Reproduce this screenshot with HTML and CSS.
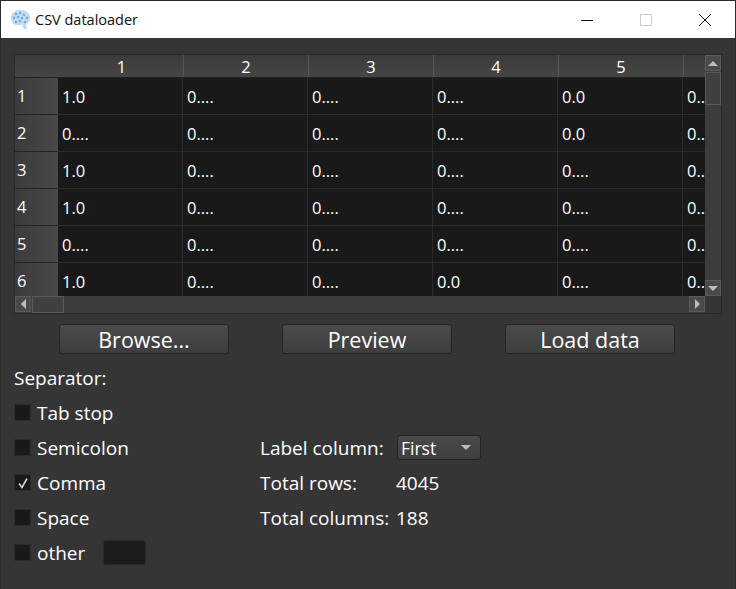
FILE: index.html
```html
<!DOCTYPE html>
<html lang="en">
<head>
    <meta charset="UTF-8">
    <title>CSV dataloader</title>
    <link rel="stylesheet" href="styles.css">
</head>
<body>
    <div class="window">
        <div class="titlebar">
            <svg class="app-icon" width="22" height="22" viewBox="0 0 22 22">
                <path d="M9 1 C4 1 1 4 1 9 C1 13 3 15 6 16 L12 16 L14 20 L17 20 L16 15 C19 14 21 11 20 8 C20 4 14 0 9 1 Z" fill="#c3dcf3"/>
                <g fill="#6ea8e2">
                    <circle cx="6" cy="5" r="1.2"/><circle cx="10" cy="4" r="1.2"/><circle cx="14" cy="6" r="1.2"/>
                    <circle cx="4" cy="9" r="1.2"/><circle cx="8" cy="8" r="1.2"/><circle cx="12" cy="9" r="1.2"/>
                    <circle cx="17" cy="9" r="1.2"/><circle cx="6" cy="13" r="1.2"/><circle cx="10" cy="12" r="1.2"/>
                    <circle cx="15" cy="13" r="1.2"/>
                </g>
            </svg>
            <span class="title">CSV dataloader</span>
            <div class="winbtns">
                <div class="winbtn"><svg width="12" height="12"><path d="M0 6.5H12" stroke="#111"/></svg></div>
                <div class="winbtn"><svg width="12" height="12"><path d="M.5.5H11.5V11.5H.5Z" fill="none" stroke="#ccc"/></svg></div>
                <div class="winbtn"><svg width="12" height="12"><path d="M0 0L12 12M12 0L0 12" stroke="#111"/></svg></div>
            </div>
        </div>

        <div class="content">
            <div class="table-frame">
                <div class="table-view">
                    <div class="header-row">
                        <div class="corner"></div>
                        <div class="col-head">1</div>
                        <div class="col-head">2</div>
                        <div class="col-head">3</div>
                        <div class="col-head">4</div>
                        <div class="col-head">5</div>
                        <div class="col-head"></div>
                    </div>
                    <div class="row">
                        <div class="row-head">1</div>
                        <div class="cell">1.0</div><div class="cell">0....</div><div class="cell">0....</div><div class="cell">0....</div><div class="cell">0.0</div><div class="cell">0...</div>
                    </div>
                    <div class="row">
                        <div class="row-head">2</div>
                        <div class="cell">0....</div><div class="cell">0....</div><div class="cell">0....</div><div class="cell">0....</div><div class="cell">0.0</div><div class="cell">0...</div>
                    </div>
                    <div class="row">
                        <div class="row-head">3</div>
                        <div class="cell">1.0</div><div class="cell">0....</div><div class="cell">0....</div><div class="cell">0....</div><div class="cell">0....</div><div class="cell">0...</div>
                    </div>
                    <div class="row">
                        <div class="row-head">4</div>
                        <div class="cell">1.0</div><div class="cell">0....</div><div class="cell">0....</div><div class="cell">0....</div><div class="cell">0....</div><div class="cell">0...</div>
                    </div>
                    <div class="row">
                        <div class="row-head">5</div>
                        <div class="cell">0....</div><div class="cell">0....</div><div class="cell">0....</div><div class="cell">0....</div><div class="cell">0....</div><div class="cell">0...</div>
                    </div>
                    <div class="row">
                        <div class="row-head">6</div>
                        <div class="cell">1.0</div><div class="cell">0....</div><div class="cell">0....</div><div class="cell">0.0</div><div class="cell">0....</div><div class="cell">0...</div>
                    </div>
                </div>
                <div class="vscroll">
                    <div class="sb-btn"><span class="arrow-up"></span></div>
                    <div class="sb-thumb-v"></div>
                    <div class="sb-btn sb-end"><span class="arrow-down"></span></div>
                </div>
                <div class="hscroll">
                    <div class="sb-btn"><span class="arrow-left"></span></div>
                    <div class="sb-thumb-h"></div>
                    <div class="sb-btn sb-end-h"><span class="arrow-right"></span></div>
                </div>
                <div class="sb-corner"></div>
            </div>

            <div class="buttons">
                <button type="button">Browse...</button>
                <button type="button">Preview</button>
                <button type="button">Load data</button>
            </div>

            <div class="sep-label">Separator:</div>

            <div class="options">
                <div class="separators">
                    <label class="check"><span class="box"></span>Tab stop</label>
                    <label class="check"><span class="box"></span>Semicolon</label>
                    <label class="check"><span class="box"><svg width="14" height="14" viewBox="0 0 14 14"><path d="M3 7.5L6 11.5L11 2.5" fill="none" stroke="#cfcfcf" stroke-width="1.6"/></svg></span>Comma</label>
                    <label class="check"><span class="box"></span>Space</label>
                    <label class="check"><span class="box"></span>other<span class="other-input"></span></label>
                </div>
                <div class="info">
                    <div class="info-row">
                        <span class="info-label">Label column:</span>
                        <div class="combo">First<span class="arrow-down combo-arrow"></span></div>
                    </div>
                    <div class="info-row">
                        <span class="info-label">Total rows:</span>
                        <span>4045</span>
                    </div>
                    <div class="info-row">
                        <span class="info-label">Total columns:</span>
                        <span>188</span>
                    </div>
                </div>
            </div>
        </div>
    </div>
</body>
</html>
```

FILE: styles.css
```css
* {
    box-sizing: border-box;
}
html, body {
    margin: 0;
    height: 100%;
}
body {
    font-family: "Open Sans", "Noto Sans", sans-serif;
    color: #fff;
    background-color: #353535;
    overflow: hidden;
}
.window {
    height: 589px;
    border: 1px solid #2b2b2b;
    border-bottom: none;
    background-color: #353535;
}
.titlebar {
    display: flex;
    align-items: center;
    height: 37px;
    padding-left: 9px;
    background-color: #fff;
    color: #111;
    font-size: 14.5px;
}
.app-icon {
    margin-right: 3px;
}
.winbtns {
    display: flex;
    margin-left: auto;
    margin-right: 1px;
}
.winbtn {
    display: flex;
    align-items: center;
    justify-content: center;
    width: 59px;
    height: 37px;
}
.content {
    padding: 16px 13px 0;
}

/* table */
.table-frame {
    display: grid;
    grid-template-columns: 690px 16px;
    grid-template-rows: 241px 17px;
    width: 708px;
    height: 260px;
    border: 1px solid #2a2a2a;
    background-color: #3a3a3a;
}
.table-view {
    overflow: hidden;
    background-color: #191919;
    font-size: 16.5px;
}
.header-row, .row {
    display: flex;
}
.header-row {
    height: 23px;
    border-bottom: 1px solid #232323;
    background: linear-gradient(#3b3b3b, #454545);
}
.corner {
    flex: 0 0 43px;
}
.col-head {
    flex: 0 0 125px;
    line-height: 23px;
    text-align: center;
    border-left: 1px solid #555;
}
.col-head:nth-child(2) {
    padding-left: 2px;
    border-left: none;
}
.row {
    height: 37px;
    border-bottom: 1px solid #2c2c2c;
}
.row-head {
    flex: 0 0 43px;
    height: 37px;
    padding-left: 2px;
    line-height: 36px;
    background: linear-gradient(90deg, #3b3b3b, #484848);
    border-bottom: 1px solid #232323;
}
.cell {
    flex: 0 0 125px;
    padding-left: 4px;
    line-height: 38px;
    border-right: 1px solid #2c2c2c;
    white-space: nowrap;
    overflow: hidden;
}

/* scrollbars */
.vscroll, .hscroll {
    display: flex;
    background-color: #3c3c3c;
}
.vscroll {
    flex-direction: column;
}
.sb-btn {
    display: flex;
    align-items: center;
    justify-content: center;
    flex: 0 0 16px;
    height: 16px;
    background-color: #4a4a4a;
    box-shadow: inset 0 0 0 1px #5a5a5a;
}
.sb-end {
    margin-top: auto;
}
.sb-end-h {
    margin-left: auto;
}
.sb-thumb-v {
    height: 33px;
    margin-top: 1px;
    background-color: #404040;
    box-shadow: inset 0 0 0 1px #5a5a5a;
}
.sb-thumb-h {
    width: 32px;
    margin-left: 1px;
    background-color: #404040;
    box-shadow: inset 0 0 0 1px #5a5a5a;
}
.sb-corner {
    background-color: #353535;
}
.arrow-up, .arrow-down, .arrow-left, .arrow-right {
    display: block;
    width: 0;
    height: 0;
    border-style: solid;
    border-color: transparent;
}
.arrow-up {
    border-width: 0 5px 5px;
    border-bottom-color: #bdbdbd;
}
.arrow-down {
    border-width: 5px 5px 0;
    border-top-color: #bdbdbd;
}
.arrow-left {
    border-width: 5px 5px 5px 0;
    border-right-color: #bdbdbd;
}
.arrow-right {
    border-width: 5px 0 5px 5px;
    border-left-color: #bdbdbd;
}

/* buttons */
.buttons {
    display: flex;
    gap: 53px;
    margin-top: 10px;
    padding-left: 45px;
}
button {
    width: 170px;
    height: 30px;
    padding: 1px 0 0;
    font-family: "Open Sans", sans-serif;
    font-size: 21.5px;
    line-height: 28px;
    color: #fff;
    background: linear-gradient(#4a4a4a, #3e3e3e);
    border: 1px solid #232323;
    border-radius: 3px;
}

/* bottom part */
.sep-label {
    margin-top: 11px;
    font-size: 19px;
    line-height: 26px;
}
.options {
    display: flex;
    margin-top: 4px;
    font-size: 19px;
}
.separators {
    width: 246px;
}
.check {
    display: flex;
    align-items: center;
    height: 35px;
}
.box {
    display: flex;
    align-items: center;
    justify-content: center;
    flex: 0 0 17px;
    height: 17px;
    margin-right: 6px;
    background-color: #191919;
    border: 1px solid #2c2c2c;
}
.other-input {
    width: 43px;
    height: 25px;
    margin-left: 18px;
    background-color: #1b1b1b;
    border: 1px solid #2a2a2a;
    border-radius: 3px;
}
.info {
    padding-top: 35px;
}
.info-row {
    display: flex;
    align-items: center;
    height: 35px;
}
.info-label {
    width: 136px;
    white-space: nowrap;
}
.combo {
    display: flex;
    align-items: center;
    justify-content: space-between;
    width: 84px;
    height: 25px;
    margin-left: 1px;
    padding: 0 9px 0 3px;
    font-size: 17.5px;
    background: linear-gradient(#4a4a4a, #3e3e3e);
    border: 1px solid #232323;
    border-radius: 3px;
}
```
